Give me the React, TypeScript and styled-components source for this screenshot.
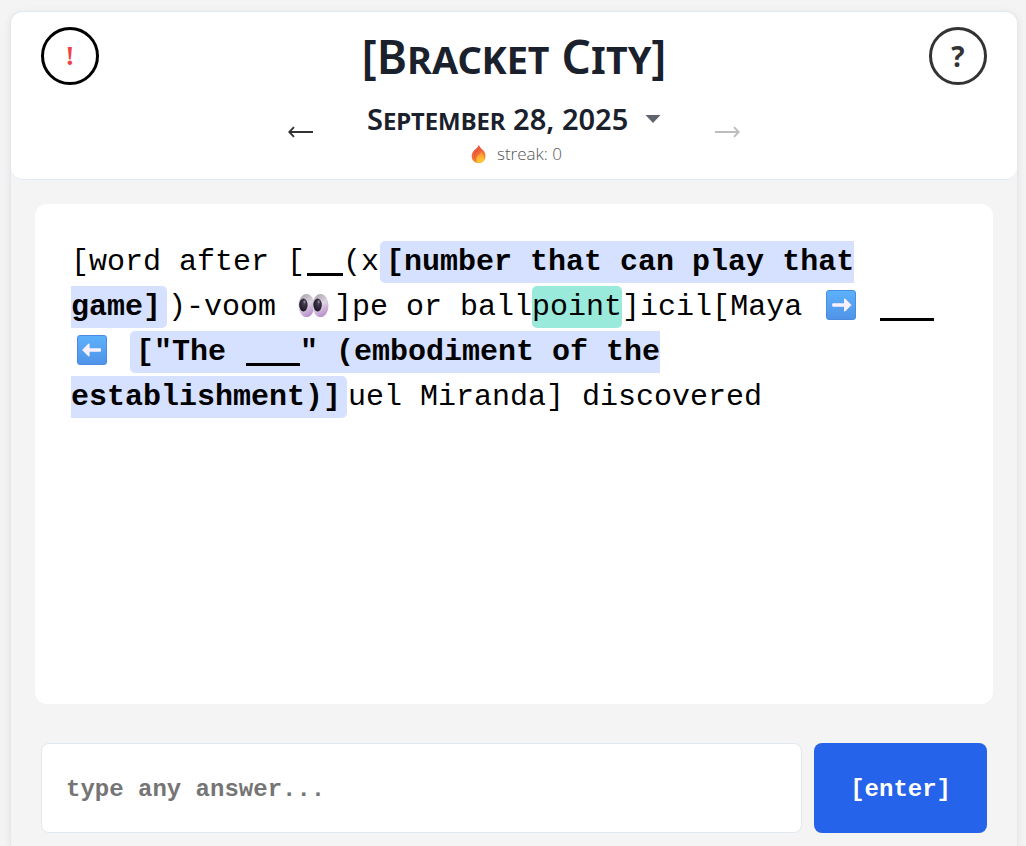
import React from "react";
import styled, { createGlobalStyle } from "styled-components";

const sans = `"Open Sans", "Noto Sans", sans-serif`;
const smallCapsSans = `"Noto Sans", "Open Sans", sans-serif`;
const mono = `"Liberation Mono", "Courier New", monospace`;

const GlobalStyle = createGlobalStyle`
  *, *::before, *::after { box-sizing: border-box; }
  body {
    margin: 0;
    background: #f4f4f4;
    color: #000;
    font-family: ${sans};
  }
`;

const Shell = styled.div`
  display: flex;
  flex-direction: column;
  min-height: calc(100vh - 11px);
  margin: 11px 8px 0 10px;
  border: 1px solid #e2e8f0;
  border-bottom: 0;
  border-radius: 12px 12px 0 0;
  box-shadow: 0 2px 8px rgba(0, 0, 0, 0.08);
`;

const Header = styled.header`
  display: grid;
  grid-template-columns: 58px 1fr 58px;
  align-items: start;
  padding: 15px 30px 12px;
  background: #fff;
  border-bottom: 1px solid #e2e8f0;
  border-radius: 12px;
`;

const RoundButton = styled.button<{ $alert?: boolean }>`
  width: 58px;
  height: 58px;
  padding: 0;
  border: 3px solid ${(p) => (p.$alert ? "#000" : "#333")};
  border-radius: 50%;
  background: #fff;
  color: ${(p) => (p.$alert ? "#ef4444" : "#333")};
  font-family: ${(p) => (p.$alert ? `"Liberation Serif", serif` : sans)};
  font-size: 28px;
  font-weight: 700;
  line-height: 52px;
  cursor: pointer;
`;

const Masthead = styled.div`
  display: flex;
  flex-direction: column;
  align-items: center;
  gap: 12px;
`;

const Title = styled.h1`
  margin: 0;
  color: #1a202c;
  font-family: ${smallCapsSans};
  font-size: 46px;
  font-weight: 600;
  font-variant: small-caps;
  line-height: 58px;
  white-space: nowrap;
`;

const TallBracket = styled.span`
  font-variant: normal;
`;

const DateNav = styled.nav`
  display: flex;
  align-items: center;
  gap: 53px;
`;

const ArrowButton = styled.button`
  display: flex;
  padding: 0;
  border: 0;
  background: none;
  color: #333;
  cursor: pointer;
  &:disabled {
    color: #bdbdbd;
    cursor: default;
  }
`;

const DateColumn = styled.div`
  display: flex;
  flex-direction: column;
  align-items: center;
`;

const DatePicker = styled.div`
  display: flex;
  align-items: center;
  gap: 16px;
`;

const DateSelect = styled.select`
  appearance: none;
  height: 44px;
  padding: 0;
  border: 0;
  background: none;
  color: #1a202c;
  font-family: ${smallCapsSans};
  font-size: 29px;
  font-weight: 600;
  font-variant: small-caps;
  line-height: 44px;
`;

const Streak = styled.div`
  display: flex;
  align-items: center;
  gap: 10px;
  padding-left: 4px;
  color: #555;
  font-size: 17px;
  font-weight: 300;
  line-height: 26px;
`;

const Puzzle = styled.main`
  min-height: 500px;
  margin: 24px 24px 0;
  padding: 36px;
  border-radius: 12px;
  background: #fff;
  font-family: ${mono};
  font-size: 30px;
  line-height: 45px;
`;

const Text = styled.p`
  margin: 0;
`;

const Clue = styled.mark`
  margin: 0 1px;
  padding: 4px 6px;
  border-radius: 5px;
  background: #d6e0ff;
  color: #000;
  font-weight: 700;
`;

const Solved = styled.mark`
  padding: 4px 0;
  border-radius: 5px;
  background: #9aeadc;
  color: #000;
`;

const Blank = styled.span<{ $chars: number }>`
  display: inline-block;
  width: ${(p) => p.$chars}ch;
  height: 3px;
  margin-left: 2px;
  background: #000;
  vertical-align: -6px;
`;

const EmojiIcon = styled.svg`
  width: 40px;
  height: 30px;
  vertical-align: -5px;
`;

const AnswerForm = styled.form`
  display: flex;
  gap: 12px;
  margin: 39px 30px 13px;
`;

const AnswerInput = styled.input`
  flex: 1;
  min-width: 0;
  height: 90px;
  padding: 2px 24px 0;
  border: 1px solid #e2e8f0;
  border-radius: 8px;
  background: #fff;
  font-family: ${mono};
  font-size: 24px;
  font-weight: 700;
  &::placeholder {
    color: #757575;
    opacity: 1;
  }
`;

const EnterButton = styled.button`
  height: 90px;
  padding: 2px 36px 0;
  border: 0;
  border-radius: 8px;
  background: #2563eb;
  color: #fff;
  font-family: ${mono};
  font-size: 24px;
  font-weight: 700;
  cursor: pointer;
`;

function Arrow({ flip }: { flip?: boolean }) {
  return (
    <svg width="26" height="14" viewBox="0 0 26 14" fill="none" stroke="currentColor" strokeWidth="1.9" aria-hidden="true">
      {flip ? <path d="M1 7H24.4M20 2.200l4.700 4.800-4.700 4.800" /> : <path d="M25 7H1.600M6 2.200l-4.700 4.800 4.700 4.800" />}
    </svg>
  );
}

function Flame() {
  return (
    <svg width="17" height="20" viewBox="0 0 18 22" aria-hidden="true">
      <defs>
        <linearGradient id="flame-outer" x1="0" y1="0" x2="0.3" y2="1">
          <stop offset="0" stopColor="#e8403c" />
          <stop offset="0.55" stopColor="#f2683a" />
          <stop offset="1" stopColor="#f9912f" />
        </linearGradient>
        <linearGradient id="flame-inner" x1="0" y1="0" x2="0.2" y2="1">
          <stop offset="0" stopColor="#f9853a" />
          <stop offset="1" stopColor="#ffd02f" />
        </linearGradient>
      </defs>
      <path d="M9.300 1C10.400 3.300 12.600 5.200 14.100 6.800C16.100 9.200 17 11.300 16.600 14.200C16.100 18.300 13 21 9 21C4.600 21 1.500 18 1.500 13.600C1.500 10.400 2.800 8.300 4.300 6.800C5.700 5.400 8.300 3.900 9.300 1Z" fill="url(#flame-outer)" />
      <path d="M12.300 8.200C11.800 10.400 9.700 11.200 8.500 12.700C6.400 14.700 6.200 17.800 7.900 20C8.800 20.800 11 20.800 12.500 19.900C15 18.400 15.700 15.600 14.700 12.800C14.200 11.200 12.800 10.200 12.300 8.200Z" fill="url(#flame-inner)" />
      <path d="M8.200 6.500C5.200 9 4 13 5.300 17" stroke="#d9542e" strokeWidth="0.800" fill="none" />
    </svg>
  );
}

function Eyes() {
  return (
    <EmojiIcon viewBox="0 0 40 30" role="img" aria-label="eyes">
      <defs>
        <linearGradient id="eye-white" x1="0.2" y1="0" x2="0.6" y2="1">
          <stop offset="0" stopColor="#aaa4ae" />
          <stop offset="0.5" stopColor="#ddd5e2" />
          <stop offset="1" stopColor="#b78ccb" />
        </linearGradient>
        <radialGradient id="eye-pupil" cx="0.6" cy="0.35" r="0.7">
          <stop offset="0" stopColor="#4c4358" />
          <stop offset="1" stopColor="#17101f" />
        </radialGradient>
      </defs>
      <ellipse cx="12.500" cy="15.500" rx="8" ry="11.500" fill="url(#eye-white)" />
      <ellipse cx="26.500" cy="15.500" rx="8" ry="11.500" fill="url(#eye-white)" />
      <ellipse cx="9.400" cy="15" rx="4.200" ry="6.500" fill="url(#eye-pupil)" />
      <ellipse cx="23.600" cy="15" rx="4.200" ry="6.500" fill="url(#eye-pupil)" />
      <ellipse cx="10.500" cy="11.800" rx="1" ry="1.600" fill="#8a8096" />
      <ellipse cx="24.700" cy="11.800" rx="1" ry="1.600" fill="#8a8096" />
    </EmojiIcon>
  );
}

function ArrowTile({ left }: { left?: boolean }) {
  const id = left ? "tile-left" : "tile-right";
  return (
    <EmojiIcon viewBox="0 0 40 30" role="img" aria-label={left ? "left arrow" : "right arrow"}>
      <defs>
        <linearGradient id={id} x1="0" y1="0" x2="0" y2="1">
          <stop offset="0" stopColor="#5cb2fb" />
          <stop offset="1" stopColor="#5093e8" />
        </linearGradient>
      </defs>
      <rect x="6.500" y="0.500" width="29" height="29" rx="2.500" fill={`url(#${id})`} stroke="#4a8ce4" />
      <path
        d={
          left
            ? "M11.100 15L17.300 8.800Q18.600 8.200 18.600 9.600V13.200H29Q30 13.200 30 14.200V15.800Q30 16.800 29 16.800H18.600V20.400Q18.600 21.800 17.300 21.200Z"
            : "M31.500 15L25.300 8.800Q24 8.200 24 9.600V13.200H13.200Q12.200 13.200 12.200 14.200V15.800Q12.200 16.800 13.200 16.800H24V20.400Q24 21.800 25.300 21.200Z"
        }
        fill="#fbf0ff"
      />
    </EmojiIcon>
  );
}

export default function App() {
  return (
    <>
      <GlobalStyle />
      <Shell>
        <Header>
          <RoundButton $alert type="button" aria-label="Announcements">!</RoundButton>
          <Masthead>
            <Title>
              <TallBracket>[</TallBracket>Bracket City<TallBracket>]</TallBracket>
            </Title>
            <DateNav aria-label="Puzzle date">
              <ArrowButton type="button" aria-label="Previous puzzle">
                <Arrow />
              </ArrowButton>
              <DateColumn>
                <DatePicker>
                  <DateSelect aria-label="Puzzle date" defaultValue="2025-09-28">
                    <option value="2025-09-28">September 28, 2025</option>
                  </DateSelect>
                  <svg width="16" height="8" viewBox="0 0 16 8" aria-hidden="true">
                    <path d="M0.500 0H15.500L8 8Z" fill="#5f636b" />
                  </svg>
                </DatePicker>
                <Streak>
                  <Flame />
                  <span>streak: 0</span>
                </Streak>
              </DateColumn>
              <ArrowButton type="button" aria-label="Next puzzle" disabled>
                <Arrow flip />
              </ArrowButton>
            </DateNav>
          </Masthead>
          <RoundButton type="button" aria-label="Help">?</RoundButton>
        </Header>

        <Puzzle>
          <Text>
            [word after [<Blank $chars={2} />(x<Clue>[number that can play that game]</Clue>)-voom <Eyes />]pe or
            ball<Solved>point</Solved>]icil[Maya <ArrowTile /> <Blank $chars={3} /> <ArrowTile left />{" "}
            <Clue>["The <Blank $chars={3} />" (embodiment of the establishment)]</Clue>uel Miranda] discovered
          </Text>
        </Puzzle>

        <AnswerForm onSubmit={(e) => e.preventDefault()}>
          <AnswerInput type="text" aria-label="Answer" placeholder="type any answer..." />
          <EnterButton type="submit">[enter]</EnterButton>
        </AnswerForm>
      </Shell>
    </>
  );
}
